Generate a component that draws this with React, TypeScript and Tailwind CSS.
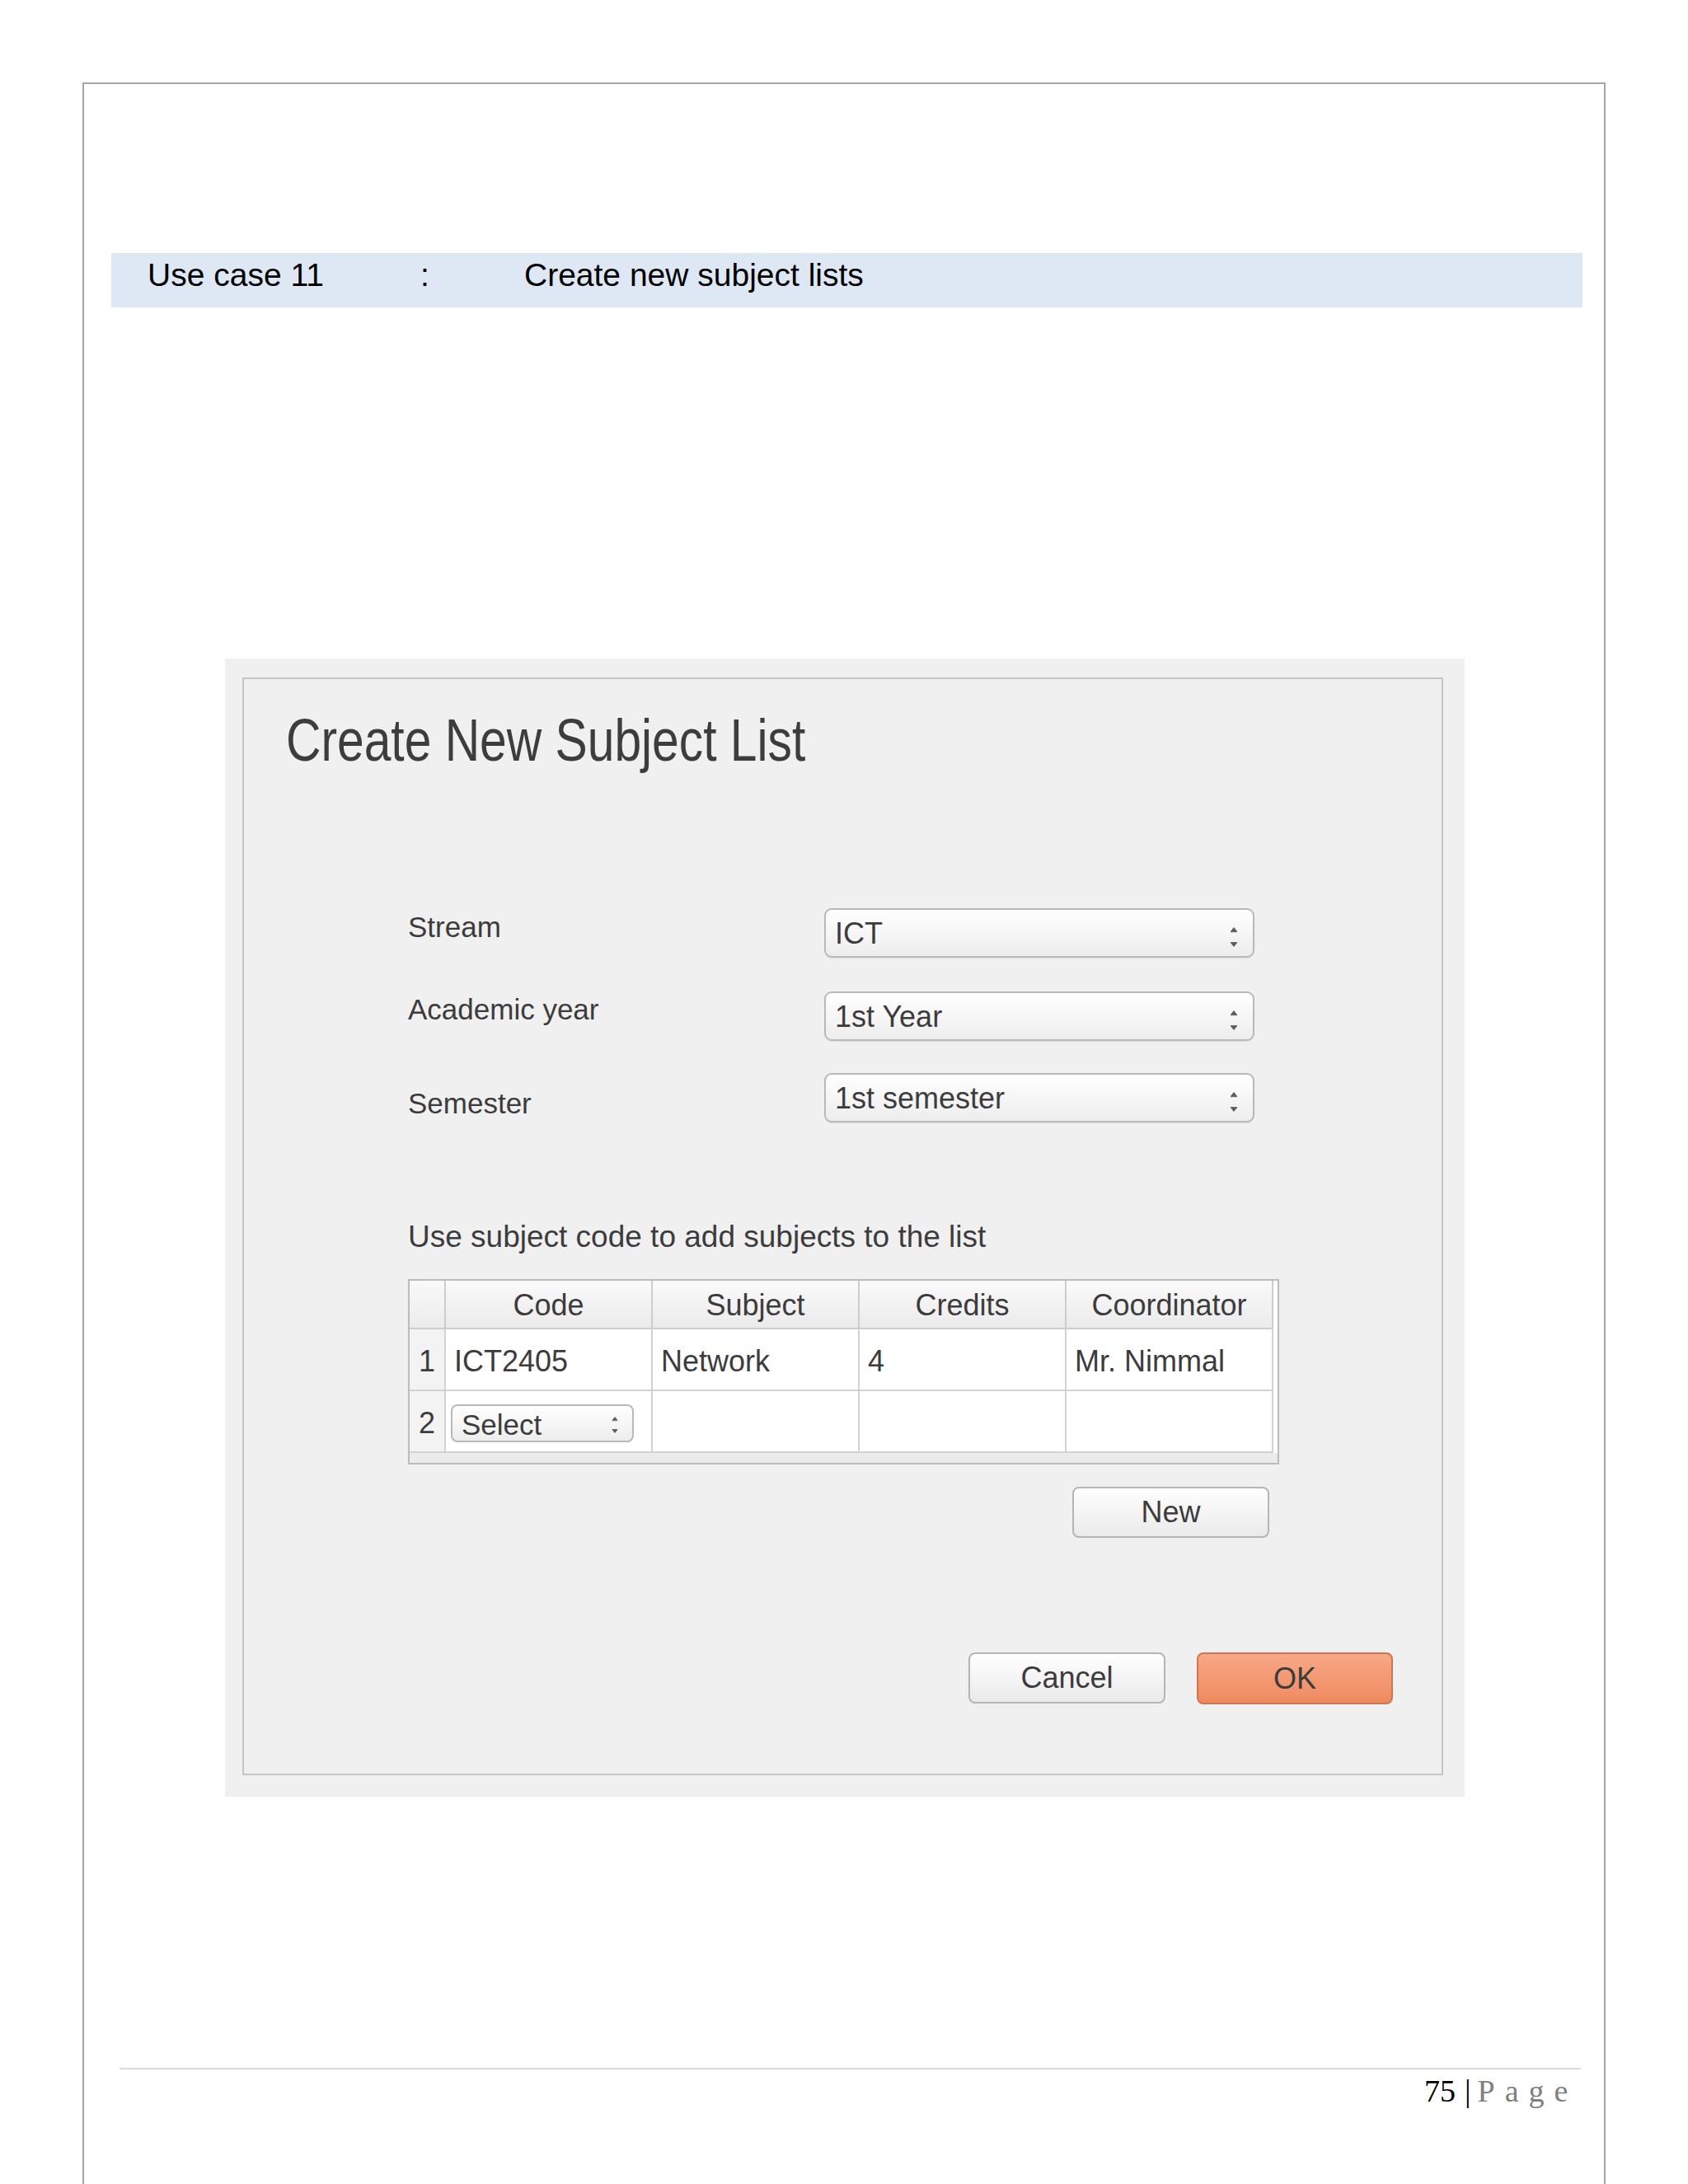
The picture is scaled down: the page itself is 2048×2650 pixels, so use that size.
const sans = "font-['Liberation_Sans',Arial,sans-serif]";

function Arrows({ className = '' }: { className?: string }) {
  return (
    <svg width="12" height="28" viewBox="0 0 12 28" className={className}>
      <path d="M2 7 L6 2 L10 7 Z" fill="#5c5c5c" />
      <rect x="2" y="7" width="8" height="1.2" fill="#6a6a6a" />
      <rect x="2" y="20" width="8" height="1.2" fill="#6a6a6a" />
      <path d="M2 21 L6 26 L10 21 Z" fill="#5c5c5c" />
    </svg>
  );
}

function Combo({ value }: { value: string }) {
  return (
    <div className="flex h-[60px] w-[522px] items-center justify-between rounded-[9px] border-2 border-[#b9b9b9] bg-linear-to-b from-white to-[#ededed] pl-[11px] pr-[17px] shadow-[0_1px_1px_rgba(0,0,0,0.08)]">
      <span className="pt-[2px] text-[36px] leading-none text-[#3c3c3c]">{value}</span>
      <Arrows className="mt-[10px]" />
    </div>
  );
}

function Button({ label, primary = false }: { label: string; primary?: boolean }) {
  return (
    <div
      className={
        primary
          ? 'flex h-[63px] w-[238px] items-center justify-center rounded-[8px] border-2 border-[#cf7550] bg-linear-to-b from-[#f7a886] to-[#ef8a5f] text-[36px] leading-none text-[#3c3c3c]'
          : 'flex h-[62px] w-[239px] items-center justify-center rounded-[8px] border-2 border-[#b5b5b5] bg-linear-to-b from-white to-[#eaeaea] text-[36px] leading-none text-[#3c3c3c]'
      }
    >
      {label}
    </div>
  );
}

const headers = ['Code', 'Subject', 'Credits', 'Coordinator'];

export default function App() {
  return (
    <div className={`h-[2650px] w-[2048px] overflow-hidden bg-white pl-[100px] pt-[100px] ${sans}`}>
      {/* Document page */}
      <div className="h-[2550px] w-[1848px] border-x-2 border-t-2 border-[#a6a6a6]">
        {/* Use case band */}
        <div className="ml-[33px] mt-[205px] flex h-[66px] w-[1785px] bg-[#dee8f5] pl-[44px] pt-[7px] text-[39px] leading-none text-black">
          <span className="w-[331px]">Use case 11</span>
          <span className="w-[126px]">:</span>
          <span>Create new subject lists</span>
        </div>

        {/* Dialog screenshot */}
        <div className="ml-[171px] mt-[426px] h-[1381px] w-[1504px] bg-[#f1f0f0] pl-[21px] pt-[23px]">
          <div className="h-[1332px] w-[1457px] border-2 border-[#c4c4c4] text-[#3c3c3c]">
            {/* condensed title face */}
            <h1 className="ml-[51px] mt-[38px] origin-left scale-x-[0.816] text-[72px] leading-none text-[#3d3d3d]">
              Create New Subject List
            </h1>

            <div className="ml-[199px] mt-[168px]">
              <div className="flex h-[60px]">
                <div className="w-[505px] pt-[5px] text-[35px] leading-none">Stream</div>
                <Combo value="ICT" />
              </div>
              <div className="mt-[41px] flex h-[60px]">
                <div className="w-[505px] pt-[4px] text-[35px] leading-none">Academic year</div>
                <Combo value="1st Year" />
              </div>
              <div className="mt-[39px] flex h-[60px]">
                <div className="w-[505px] pt-[19px] text-[35px] leading-none">Semester</div>
                <Combo value="1st semester" />
              </div>

              <div className="mt-[120px] text-[37px] leading-none">
                Use subject code to add subjects to the list
              </div>

              {/* Table */}
              <div className="mt-[33px] h-[225px] w-[1057px] border-2 border-[#bcbcbc] bg-[#ebebeb]">
                <div className="grid grid-cols-[44px_251px_251px_251px_251px] grid-rows-[59px_75px_75px] bg-white">
                  <div className="border-b-2 border-r-2 border-[#cdcdcd] bg-linear-to-b from-[#f9f9f9] to-[#ececec]" />
                  {headers.map((h) => (
                    <div
                      key={h}
                      className="flex items-center justify-center border-b-2 border-r-2 border-[#cdcdcd] bg-linear-to-b from-[#fafafa] to-[#ebebeb] pt-[2px] text-[36px] leading-none"
                    >
                      {h}
                    </div>
                  ))}

                  <div className="flex items-center justify-center border-b-2 border-r-2 border-[#d2d2d2] bg-[#f3f3f3] pt-[4px] text-[36px] leading-none">
                    1
                  </div>
                  {['ICT2405', 'Network', '4', 'Mr. Nimmal'].map((v) => (
                    <div
                      key={v}
                      className="flex items-center border-b-2 border-r-2 border-[#d2d2d2] pl-[10px] pt-[4px] text-[36px] leading-none"
                    >
                      {v}
                    </div>
                  ))}

                  <div className="flex items-center justify-center border-b-2 border-r-2 border-[#d2d2d2] bg-[#f3f3f3] pt-[4px] text-[36px] leading-none">
                    2
                  </div>
                  <div className="border-b-2 border-r-2 border-[#d2d2d2] pl-[6px] pt-[16px]">
                    <div className="flex h-[46px] w-[222px] items-center justify-between rounded-[8px] border-2 border-[#b9b9b9] bg-linear-to-b from-white to-[#ededed] pl-[11px] pr-[16px]">
                      <span className="pt-[3px] text-[35px] leading-none">Select</span>
                      <Arrows className="mt-[4px] h-[24px] w-[10px]" />
                    </div>
                  </div>
                  <div className="border-b-2 border-r-2 border-[#d2d2d2]" />
                  <div className="border-b-2 border-r-2 border-[#d2d2d2]" />
                  <div className="border-b-2 border-r-2 border-[#d2d2d2]" />
                </div>
              </div>

              <div className="ml-[806px] mt-[27px]">
                <Button label="New" />
              </div>

              <div className="ml-[680px] mt-[139px] flex gap-[38px]">
                <Button label="Cancel" />
                <Button label="OK" primary />
              </div>
            </div>
          </div>
        </div>

        {/* Footer */}
        <div className="ml-[43px] mt-[329px] h-[2px] w-[1773px] bg-[#dadada]" />
        <div className="ml-[1626px] mt-[7px] flex font-['Liberation_Serif','Times_New_Roman',serif] text-[38px] leading-none">
          <span className="text-black">75</span>
          <span className="ml-[11px] mr-[8px] text-black">|</span>
          <span className="tracking-[12px] text-[#7f7f7f]">Page</span>
        </div>
      </div>
    </div>
  );
}
